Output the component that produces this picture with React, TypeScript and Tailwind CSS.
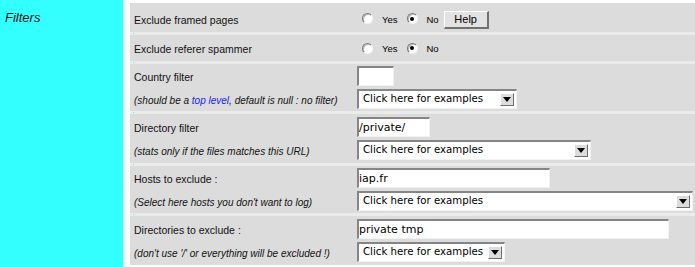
import React from 'react';

const sans = "font-['Liberation_Sans',Arial,sans-serif]";
const dv = "font-['DejaVu_Sans',sans-serif]";

const Sep: React.FC = () => (
  <div className="h-[3px] bg-[#ebebeb] pl-[3px] pt-[1px]">
    <div className="w-[1px] h-[1px] bg-[#33ffff]" />
  </div>
);

const Radio: React.FC<{ checked?: boolean }> = ({ checked }) => (
  <span className="w-[11px] h-[11px] rounded-full bg-white border border-t-[#7a7a7a] border-l-[#7a7a7a] border-b-[#f4f4f4] border-r-[#f4f4f4] flex items-center justify-center shadow-[inset_1px_1px_0_#b8b8b8]">
    {checked && <span className="w-[4px] h-[4px] rounded-full bg-black" />}
  </span>
);

const TextBox: React.FC<{ w: string; value?: string }> = ({ w, value }) => (
  <div className={`${w} h-[20px] bg-white border-t-2 border-l-2 border-b border-r border-t-[#858585] border-l-[#858585] border-b-[#f2f2f2] border-r-[#f2f2f2] flex items-center ${dv} text-[11px] text-black leading-none`}>
    {value}
  </div>
);

const Select: React.FC<{ w: string }> = ({ w }) => (
  <div className={`${w} h-[20px] bg-white border-t-2 border-l-2 border-b border-r border-t-[#858585] border-l-[#858585] border-b-[#f2f2f2] border-r-[#f2f2f2] flex items-center ${dv} text-[10.2px] text-black pl-[4px] pr-[2px] leading-none`}>
    <span className="flex-1">Click here for examples</span>
    <span className="w-[14px] h-[13px] bg-[#dcdcdc] border border-t-white border-l-white border-b-[#6e6e6e] border-r-[#6e6e6e] flex items-center justify-center">
      <svg width="8" height="5" viewBox="0 0 8 5">
        <polygon points="0,0 8,0 4,5" fill="#000" />
      </svg>
    </span>
  </div>
);

const Label: React.FC<{ children: React.ReactNode }> = ({ children }) => (
  <div className={`w-[223px] pt-[4px] ${sans} text-[10.5px] text-[#111]`}>{children}</div>
);

const Note: React.FC<{ children: React.ReactNode }> = ({ children }) => (
  <div className={`w-[223px] pt-[2px] ${sans} italic text-[10px] text-[#111]`}>{children}</div>
);

const YesNo: React.FC<{ help?: boolean }> = ({ help }) => (
  <div className={`flex items-center ${sans} text-[9.5px] text-black`}>
    <div className="ml-[5px]"><Radio /></div>
    <span className="ml-[9px] mt-[3px]">Yes</span>
    <div className="ml-[9px]"><Radio checked /></div>
    <span className="ml-[9px] mt-[3px]">No</span>
    {help && (
      <button className={`ml-[5px] mt-[3px] w-[45px] h-[18px] bg-[#e2e2e2] border border-t-white border-l-white border-b-2 border-r-2 border-b-[#707070] border-r-[#707070] ${sans} text-[11px] text-black leading-none`}>
        Help
      </button>
    )}
  </div>
);

export default function App() {
  return (
    <div className="w-[695px] h-[267px] bg-white flex overflow-hidden">
      <div className="w-[123px] h-full bg-[#33ffff] pl-[5px] pt-[8px]">
        <div className={`${sans} italic text-[13px] text-[#111]`}>Filters</div>
      </div>
      <div className="flex-1 ml-[7px] pt-[3px] pb-[2px]">
        <div className="bg-[#dcdcdc] h-full flex flex-col">
          <div className="h-[29px] flex items-center pl-[4px] pt-[2px]">
            <Label>Exclude framed pages</Label>
            <YesNo help />
          </div>
          <Sep />
          <div className="h-[26px] flex items-center pl-[4px]">
            <Label>Exclude referer spammer</Label>
            <YesNo />
          </div>
          <Sep />
          <div className="flex flex-col pt-[2px] pb-[2px] gap-[3px] pl-[4px]">
            <div className="flex items-center h-[20px]">
              <Label>Country filter</Label>
              <TextBox w="w-[37px]" />
            </div>
            <div className="flex items-center h-[20px]">
              <Note>
                (should be a <span className="text-[#1a1aff]">top level</span>, default is null : no filter)
              </Note>
              <Select w="w-[160px]" />
            </div>
          </div>
          <Sep />
          <div className="flex flex-col pt-[3px] pb-[3px] gap-[3px] pl-[4px]">
            <div className="flex items-center h-[20px]">
              <Label>Directory filter</Label>
              <TextBox w="w-[73px]" value="/private/" />
            </div>
            <div className="flex items-center h-[20px]">
              <Note>(stats only if the files matches this URL)</Note>
              <Select w="w-[234px]" />
            </div>
          </div>
          <Sep />
          <div className="flex flex-col pt-[2px] pb-[2px] gap-[3px] pl-[4px]">
            <div className="flex items-center h-[20px]">
              <Label>Hosts to exclude :</Label>
              <TextBox w="w-[193px]" value="iap.fr" />
            </div>
            <div className="flex items-center h-[20px]">
              <Note>(Select here hosts you don't want to log)</Note>
              <Select w="w-[336px]" />
            </div>
          </div>
          <Sep />
          <div className="flex flex-col pt-[3px] pb-[3px] gap-[3px] pl-[4px]">
            <div className="flex items-center h-[20px]">
              <Label>Directories to exclude :</Label>
              <TextBox w="w-[312px]" value="private tmp" />
            </div>
            <div className="flex items-center h-[20px]">
              <Note>(don't use '/' or everything will be excluded !)</Note>
              <Select w="w-[148px]" />
            </div>
          </div>
        </div>
      </div>
    </div>
  );
}
